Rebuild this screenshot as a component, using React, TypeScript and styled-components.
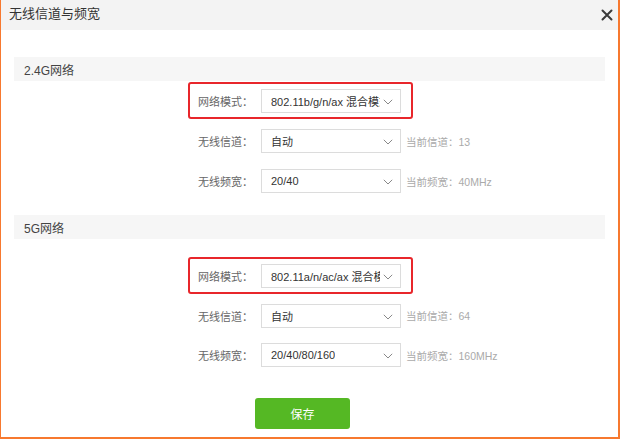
import React from "react";
import styled, { createGlobalStyle } from "styled-components";

const Global = createGlobalStyle`
  html, body { margin: 0; padding: 0; background: #fff; }
  body { font-family: "Liberation Sans", "Noto Sans CJK SC", sans-serif; }
`;

const ORANGE = "#f7792f";

const Frame = styled.div`
  width: 620px;
  height: 439px;
  box-sizing: border-box;
  border-left: 1px solid ${ORANGE};
  border-right: 2px solid ${ORANGE};
  border-bottom: 2px solid ${ORANGE};
  background: #fff;
  display: flex;
  flex-direction: column;
  overflow: hidden;
`;

const Header = styled.div`
  height: 30px;
  flex: none;
  background: #f3f3f3;
  display: flex;
  align-items: center;
  justify-content: space-between;
  padding: 0 5px 0 8px;
`;

const Title = styled.div`
  font-size: 13px;
  color: #333;
  margin-top: -5px;
`;

const Close = styled.button`
  border: 0;
  background: none;
  padding: 0;
  width: 12px;
  height: 12px;
  display: flex;
  cursor: pointer;
`;

const Body = styled.div`
  padding: 27px 13px 0 13px;
  display: flex;
  flex-direction: column;
`;

const SectionBar = styled.div<{ $mt?: number }>`
  height: 24px;
  background: #f6f6f6;
  margin-top: ${(p) => p.$mt ?? 0}px;
  padding-left: 10px;
  display: flex;
  align-items: center;
  font-size: 12px;
  color: #444;
`;

const Form = styled.div<{ $mt: number; $gap: number }>`
  display: flex;
  flex-direction: column;
  gap: ${(p) => p.$gap}px;
  margin-top: ${(p) => p.$mt}px;
  padding-left: 184px;
`;

const Row = styled.div<{ $highlight?: boolean }>`
  position: relative;
  display: flex;
  align-items: center;
  width: fit-content;
  height: 24px;
  &::after {
    content: "";
    display: ${(p) => (p.$highlight ? "block" : "none")};
    position: absolute;
    top: -7px;
    bottom: -6px;
    left: -10px;
    right: -12px;
    border: 2px solid #e8262b;
    border-radius: 3px;
    pointer-events: none;
  }
`;

const Label = styled.div`
  width: 63px;
  flex: none;
  font-size: 11px;
  color: #666;
  white-space: nowrap;
`;

const Select = styled.div`
  position: relative;
  width: 140px;
  height: 24px;
  box-sizing: border-box;
  border: 1px solid #dcdcdc;
  background: #fff;
  padding: 0 20px 0 9px;
  display: flex;
  align-items: center;
  flex: none;
`;

const Value = styled.span`
  font-size: 11px;
  color: #333;
  white-space: nowrap;
  overflow: hidden;
`;

const Chevron = styled.svg`
  position: absolute;
  right: 7px;
  top: 9px;
`;

const Hint = styled.div`
  margin-left: 5px;
  font-size: 10.5px;
  color: #aaa;
  white-space: nowrap;
`;

const Footer = styled.div`
  margin-top: 31px;
  padding-left: 241px;
`;

const SaveButton = styled.button`
  width: 95px;
  height: 31px;
  border: 0;
  border-radius: 3px;
  background: #55b824;
  color: #fff;
  font-family: "Liberation Sans", "Noto Sans CJK SC", sans-serif;
  font-size: 12px;
  cursor: pointer;
`;

type Field = { label: string; value: string; hint?: string; highlight?: boolean };

const Down = () => (
  <Chevron width="10" height="6" viewBox="0 0 10 6">
    <path d="M0.8 0.8 L5 5 L9.2 0.8" fill="none" stroke="#888" strokeWidth="1" />
  </Chevron>
);

const FieldRow = ({ label, value, hint, highlight }: Field) => (
  <Row $highlight={highlight}>
    <Label>{label}</Label>
    <Select>
      <Value>{value}</Value>
      <Down />
    </Select>
    {hint && <Hint>{hint}</Hint>}
  </Row>
);

const band24: Field[] = [
  { label: "网络模式：", value: "802.11b/g/n/ax 混合模式", highlight: true },
  { label: "无线信道：", value: "自动", hint: "当前信道：13" },
  { label: "无线频宽：", value: "20/40", hint: "当前频宽：40MHz" },
];

const band5: Field[] = [
  { label: "网络模式：", value: "802.11a/n/ac/ax 混合模式", highlight: true },
  { label: "无线信道：", value: "自动", hint: "当前信道：64" },
  { label: "无线频宽：", value: "20/40/80/160", hint: "当前频宽：160MHz" },
];

export default function App() {
  return (
    <>
      <Global />
      <Frame>
        <Header>
          <Title>无线信道与频宽</Title>
          <Close aria-label="关闭">
            <svg width="12" height="12" viewBox="0 0 12 12">
              <path d="M1.5 1.5 L10.5 10.5 M10.5 1.5 L1.5 10.5" stroke="#3a3a3a" strokeWidth="2" strokeLinecap="round" />
            </svg>
          </Close>
        </Header>
        <Body>
          <SectionBar>2.4G网络</SectionBar>
          <Form $mt={8} $gap={16}>
            {band24.map((f) => (
              <FieldRow key={f.label} {...f} />
            ))}
          </Form>
          <SectionBar $mt={22}>5G网络</SectionBar>
          <Form $mt={25} $gap={15.5}>
            {band5.map((f) => (
              <FieldRow key={f.label} {...f} />
            ))}
          </Form>
          <Footer>
            <SaveButton>保存</SaveButton>
          </Footer>
        </Body>
      </Frame>
    </>
  );
}
